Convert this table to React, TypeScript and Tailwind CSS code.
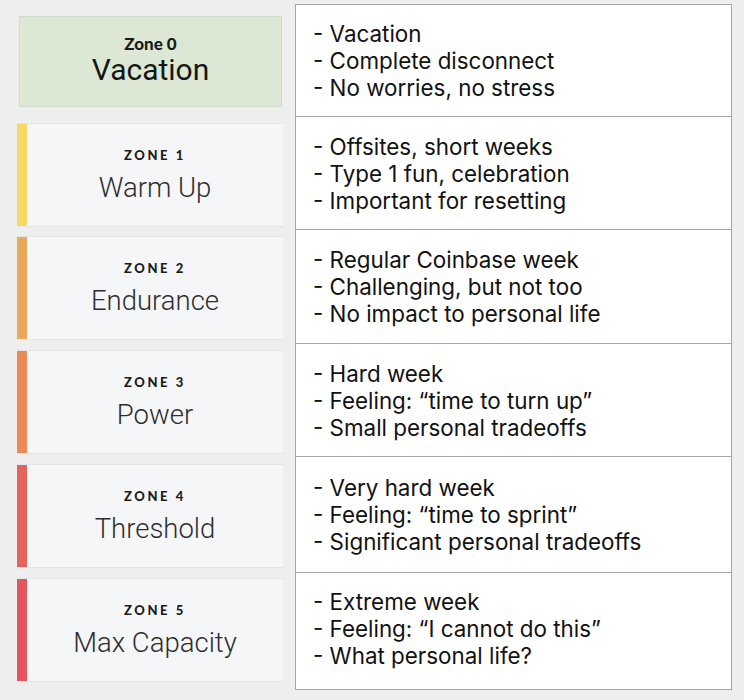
const zones = [
  { label: "ZONE 1", title: "Warm Up", bar: "bg-[#f7d766]", mt: "mt-4" },
  { label: "ZONE 2", title: "Endurance", bar: "bg-[#e9a95b]", mt: "mt-[9px]" },
  { label: "ZONE 3", title: "Power", bar: "bg-[#ec8a55]", mt: "mt-[10px]" },
  { label: "ZONE 4", title: "Threshold", bar: "bg-[#e6625d]", mt: "mt-[10px]" },
  { label: "ZONE 5", title: "Max Capacity", bar: "bg-[#e3555f]", mt: "mt-[10px]" },
];

const notes = [
  { h: "h-[112px]", lines: ["Vacation", "Complete disconnect", "No worries, no stress"] },
  { h: "h-[113px]", lines: ["Offsites, short weeks", "Type 1 fun, celebration", "Important for resetting"] },
  { h: "h-[114px]", lines: ["Regular Coinbase week", "Challenging, but not too", "No impact to personal life"] },
  { h: "h-[113px]", lines: ["Hard week", "Feeling: \u201Ctime to turn up\u201D", "Small personal tradeoffs"] },
  { h: "h-[116px]", lines: ["Very hard week", "Feeling: \u201Ctime to sprint\u201D", "Significant personal tradeoffs"] },
  { h: "h-[111px]", lines: ["Extreme week", "Feeling: \u201CI cannot do this\u201D", "What personal life?"] },
];

function ZoneCard({ label, title, bar, mt }: { label: string; title: string; bar: string; mt: string }) {
  return (
    <div className={`flex h-[104px] w-[266px] border-y border-[#e4e5e7] bg-[#f5f6f8] ${mt}`}>
      <div className={`w-[10px] shrink-0 ${bar}`} />
      <div className="flex flex-1 flex-col items-center justify-center gap-[9px]">
        <div className="font-['Lato',sans-serif] text-[13px] font-black leading-4 tracking-[0.2em] text-[#1c1c1c]">
          {label}
        </div>
        <div className="font-['Roboto',sans-serif] text-[27.5px] font-light leading-8 text-[#2e2e2e]">{title}</div>
      </div>
    </div>
  );
}

export default function App() {
  return (
    <div className="flex h-[700px] w-[744px] bg-[#eeeeee] pl-[17px] pt-1">
      <div className="flex w-[278px] flex-col pt-3">
        <div className="ml-[2px] flex h-[91px] w-[263px] flex-col items-center justify-center border border-[#cfdcc6] bg-[#dce8d4] pb-1">
          <div className="font-['Lato',sans-serif] text-[17px] font-black leading-5 text-[#1a1a1a]">Zone 0</div>
          <div className="font-['Roboto',sans-serif] text-[30px] leading-8 text-[#161616]">Vacation</div>
        </div>
        {zones.map((z) => (
          <ZoneCard key={z.label} {...z} />
        ))}
      </div>
      <div className="flex h-[686px] w-[437px] flex-col divide-y divide-[#a6a6a6] border border-[#a6a6a6] bg-white">
        {notes.map((n, i) => (
          <div key={i} className={`flex flex-col justify-center pl-[17px] ${n.h}`}>
            {n.lines.map((l) => (
              <div key={l} className="font-['Inter',sans-serif] text-[22.4px] leading-[27px] text-[#121212]">
                - {l}
              </div>
            ))}
          </div>
        ))}
      </div>
    </div>
  );
}
